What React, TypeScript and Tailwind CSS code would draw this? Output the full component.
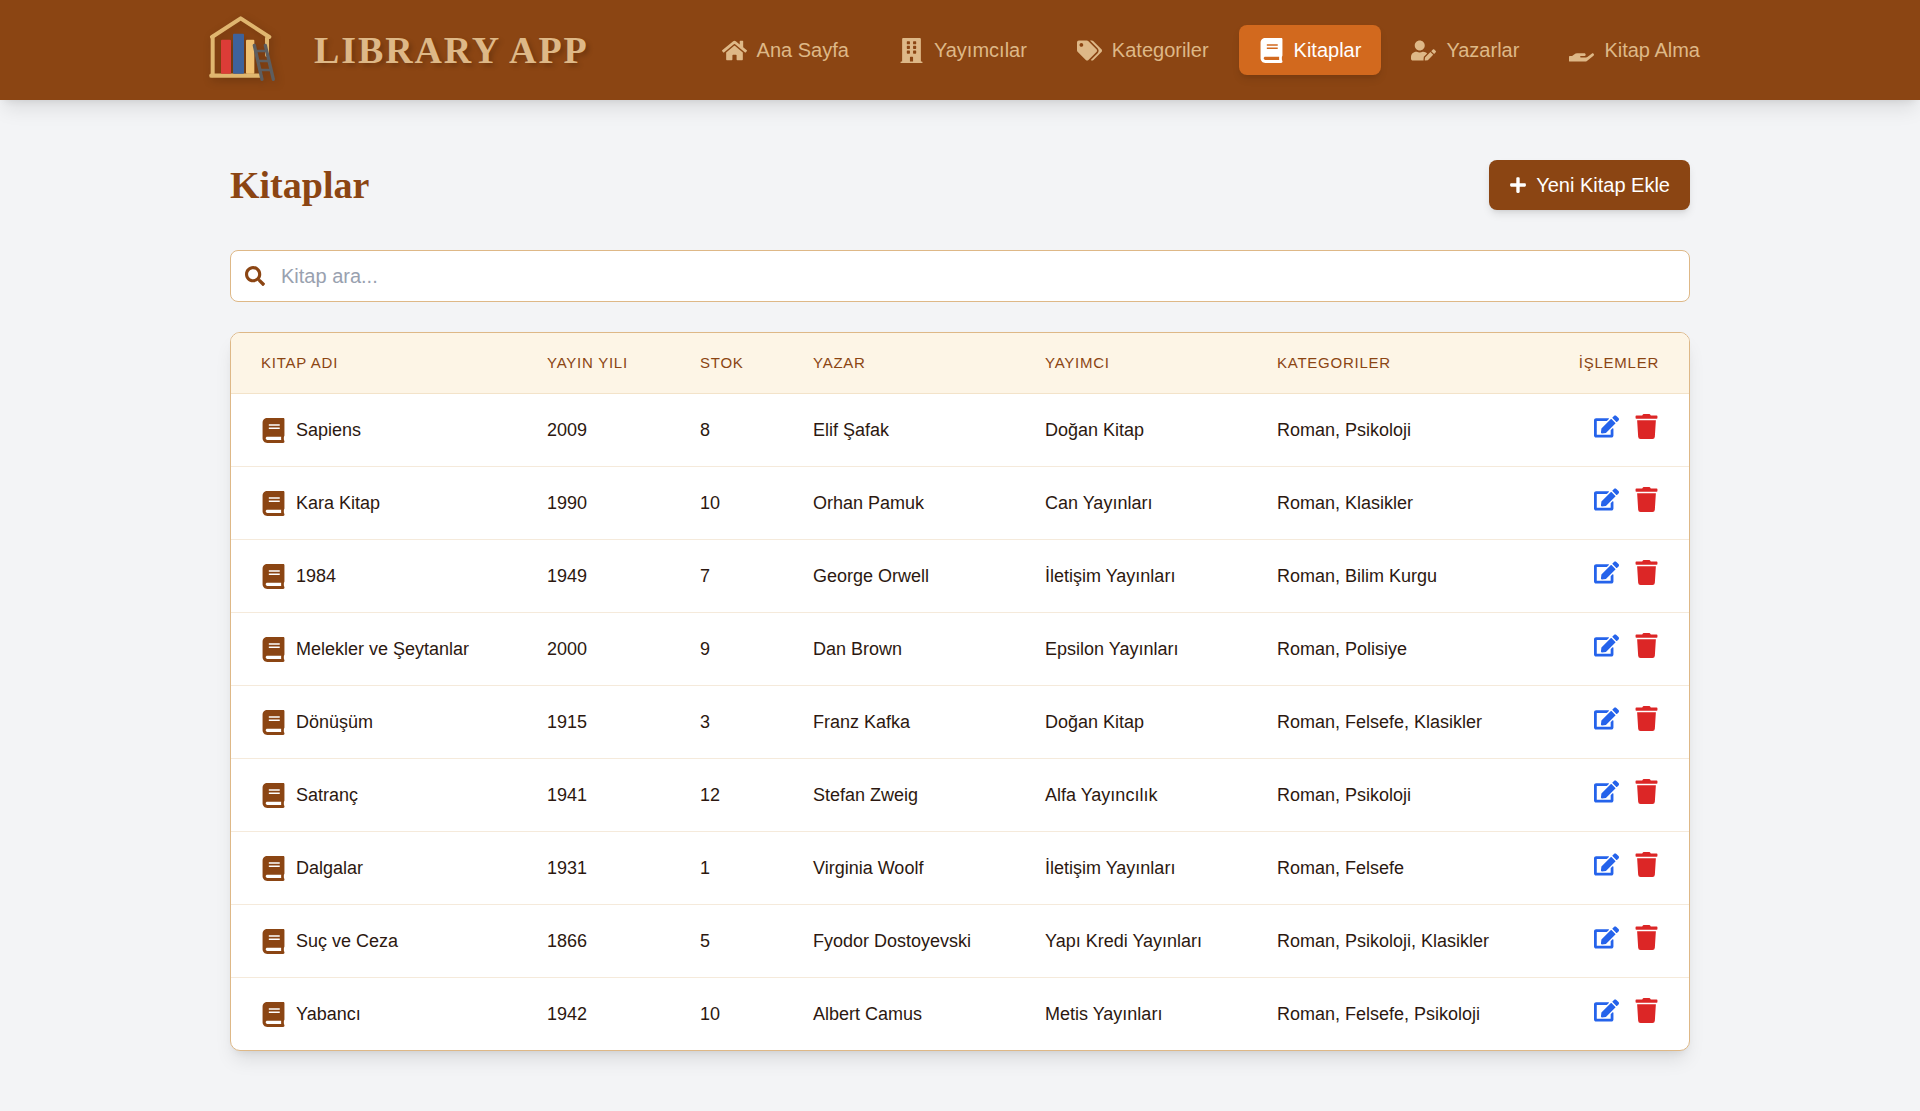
import type { ReactNode } from "react";
import {
  FaBook,
  FaBuilding,
  FaEdit,
  FaHandHolding,
  FaHome,
  FaPlus,
  FaSearch,
  FaTags,
  FaTrash,
  FaUserEdit,
} from "react-icons/fa";

type Book = {
  title: string;
  year: number;
  stock: number;
  author: string;
  publisher: string;
  categories: string;
};

const books: Book[] = [
  { title: "Sapiens", year: 2009, stock: 8, author: "Elif Şafak", publisher: "Doğan Kitap", categories: "Roman, Psikoloji" },
  { title: "Kara Kitap", year: 1990, stock: 10, author: "Orhan Pamuk", publisher: "Can Yayınları", categories: "Roman, Klasikler" },
  { title: "1984", year: 1949, stock: 7, author: "George Orwell", publisher: "İletişim Yayınları", categories: "Roman, Bilim Kurgu" },
  { title: "Melekler ve Şeytanlar", year: 2000, stock: 9, author: "Dan Brown", publisher: "Epsilon Yayınları", categories: "Roman, Polisiye" },
  { title: "Dönüşüm", year: 1915, stock: 3, author: "Franz Kafka", publisher: "Doğan Kitap", categories: "Roman, Felsefe, Klasikler" },
  { title: "Satranç", year: 1941, stock: 12, author: "Stefan Zweig", publisher: "Alfa Yayıncılık", categories: "Roman, Psikoloji" },
  { title: "Dalgalar", year: 1931, stock: 1, author: "Virginia Woolf", publisher: "İletişim Yayınları", categories: "Roman, Felsefe" },
  { title: "Suç ve Ceza", year: 1866, stock: 5, author: "Fyodor Dostoyevski", publisher: "Yapı Kredi Yayınları", categories: "Roman, Psikoloji, Klasikler" },
  { title: "Yabancı", year: 1942, stock: 10, author: "Albert Camus", publisher: "Metis Yayınları", categories: "Roman, Felsefe, Psikoloji" },
];

const columns = ["KITAP ADI", "YAYIN YILI", "STOK", "YAZAR", "YAYIMCI", "KATEGORILER"];

const navItems: { label: string; icon: ReactNode; active?: boolean }[] = [
  { label: "Ana Sayfa", icon: <FaHome size={25} /> },
  { label: "Yayımcılar", icon: <FaBuilding size={25} /> },
  { label: "Kategoriler", icon: <FaTags size={25} /> },
  { label: "Kitaplar", icon: <FaBook size={25} />, active: true },
  { label: "Yazarlar", icon: <FaUserEdit size={25} /> },
  { label: "Kitap Alma", icon: <FaHandHolding size={25} /> },
];

function Logo() {
  return (
    <svg
      viewBox="-15 0 240 240"
      className="size-20 shrink-0 drop-shadow-[2px_3px_4px_rgba(0,0,0,0.2)]"
      fill="none"
      aria-hidden="true"
    >
      <g stroke="#e0b66f" strokeWidth="12" strokeLinecap="round" strokeLinejoin="round">
        <path d="M23 84V196M186 84V135" />
        <path d="M21 81L107 25L193 81" />
        <path d="M19 197H165" strokeWidth="13" />
      </g>
      <rect x="48" y="89" width="30" height="102" rx="3" fill="#dc3c37" />
      <rect x="84" y="71" width="33" height="120" rx="3" fill="#3e629b" />
      <rect x="123" y="89" width="25" height="102" rx="3" fill="#f0c071" />
      <g stroke="#5d5e60" strokeLinecap="round">
        <path d="M148 106L171 208M181 106L205 208" strokeWidth="10" />
        <path d="M153 123H183M160 153H190M166 180H197" strokeWidth="8" />
      </g>
    </svg>
  );
}

function Header() {
  return (
    <header className="bg-[#8b4513] shadow-[0_12px_19px_-4px_rgba(0,0,0,0.1),0_5px_8px_-5px_rgba(0,0,0,0.1)]">
      <div className="mx-auto flex max-w-[1600px] items-center justify-between px-10 py-2.5">
        <a href="#" className="flex items-center gap-[34px]">
          <Logo />
          <span className="font-['Liberation_Serif',serif] text-[38px] leading-[50px] font-bold tracking-wider whitespace-nowrap text-[#deb887] [text-shadow:3px_3px_5px_rgba(0,0,0,0.2)]">
            LIBRARY APP
          </span>
        </a>
        <nav className="flex items-center gap-2.5">
          {navItems.map((item) => (
            <a
              key={item.label}
              href="#"
              aria-current={item.active ? "page" : undefined}
              className={
                item.active
                  ? "flex items-center gap-2.5 rounded-lg bg-[#d2691e] px-5 py-2.5 text-xl leading-[30px] whitespace-nowrap text-white shadow-[0_5px_8px_-1px_rgba(0,0,0,0.1),0_3px_5px_-3px_rgba(0,0,0,0.1)]"
                  : "flex items-center gap-2.5 rounded-lg px-5 py-2.5 text-xl leading-[30px] whitespace-nowrap text-[#deb887]"
              }
            >
              {item.icon}
              {item.label}
            </a>
          ))}
        </nav>
      </div>
    </header>
  );
}

function BookTable() {
  return (
    <div className="mt-[30px] overflow-hidden rounded-[10px] border border-[#deb887] bg-white shadow-[0_12px_19px_-4px_rgba(0,0,0,0.1),0_5px_8px_-5px_rgba(0,0,0,0.1)]">
      <table className="w-full">
        <colgroup>
          <col className="w-[286px]" />
          <col className="w-[153px]" />
          <col className="w-[113px]" />
          <col className="w-[232px]" />
          <col className="w-[232px]" />
          <col />
          <col />
        </colgroup>
        <thead>
          <tr className="bg-[#fdf5e6] text-[15px] leading-5 tracking-wider text-[#8b4513]">
            {columns.map((name) => (
              <th key={name} className="px-[30px] py-5 text-left font-normal whitespace-nowrap">
                {name}
              </th>
            ))}
            <th className="px-[30px] py-5 text-right font-normal whitespace-nowrap">İŞLEMLER</th>
          </tr>
        </thead>
        <tbody>
          {books.map((book) => (
            <tr
              key={book.title}
              className="border-t border-[#deb887]/30 text-lg leading-8 whitespace-nowrap text-[#2c1810]"
            >
              <td className="px-[30px] py-5">
                <div className="flex items-center gap-2.5">
                  <FaBook size={25} className="text-[#8b4513]" />
                  {book.title}
                </div>
              </td>
              <td className="px-[30px] py-5">{book.year}</td>
              <td className="px-[30px] py-5">{book.stock}</td>
              <td className="px-[30px] py-5">{book.author}</td>
              <td className="px-[30px] py-5">{book.publisher}</td>
              <td className="px-[30px] py-5">{book.categories}</td>
              <td className="px-[30px] py-5 align-top">
                <div className="flex justify-end gap-[15px]">
                  <button type="button" aria-label={`${book.title} düzenle`} className="text-[#2563eb]">
                    <FaEdit size={25} />
                  </button>
                  <button type="button" aria-label={`${book.title} sil`} className="text-[#dc2626]">
                    <FaTrash size={25} />
                  </button>
                </div>
              </td>
            </tr>
          ))}
        </tbody>
      </table>
    </div>
  );
}

export default function App() {
  return (
    <div className="min-h-screen bg-gray-100 font-['Liberation_Sans',Arial,sans-serif]">
      <Header />
      <main className="mx-auto max-w-[1540px] px-10 py-[60px]">
        <div className="flex items-center justify-between">
          <h1 className="font-['Liberation_Serif',serif] text-[38px] leading-[50px] font-bold text-[#8b4513]">
            Kitaplar
          </h1>
          <button
            type="button"
            className="flex items-center gap-[9px] rounded-lg bg-[#8b4513] px-5 py-2.5 text-xl leading-[30px] text-white shadow-[0_5px_8px_-1px_rgba(0,0,0,0.1),0_3px_5px_-3px_rgba(0,0,0,0.1)]"
          >
            <FaPlus size={18} />
            Yeni Kitap Ekle
          </button>
        </div>
        <label className="mt-10 flex items-center gap-4 rounded-lg border border-[#deb887] bg-white px-3.5">
          <FaSearch size={20} className="text-[#8b4513]" />
          <input
            type="text"
            aria-label="Kitap ara"
            placeholder="Kitap ara..."
            className="flex-1 py-2.5 text-xl leading-[30px] text-[#2c1810] outline-none placeholder:text-gray-400"
          />
        </label>
        <BookTable />
      </main>
    </div>
  );
}
